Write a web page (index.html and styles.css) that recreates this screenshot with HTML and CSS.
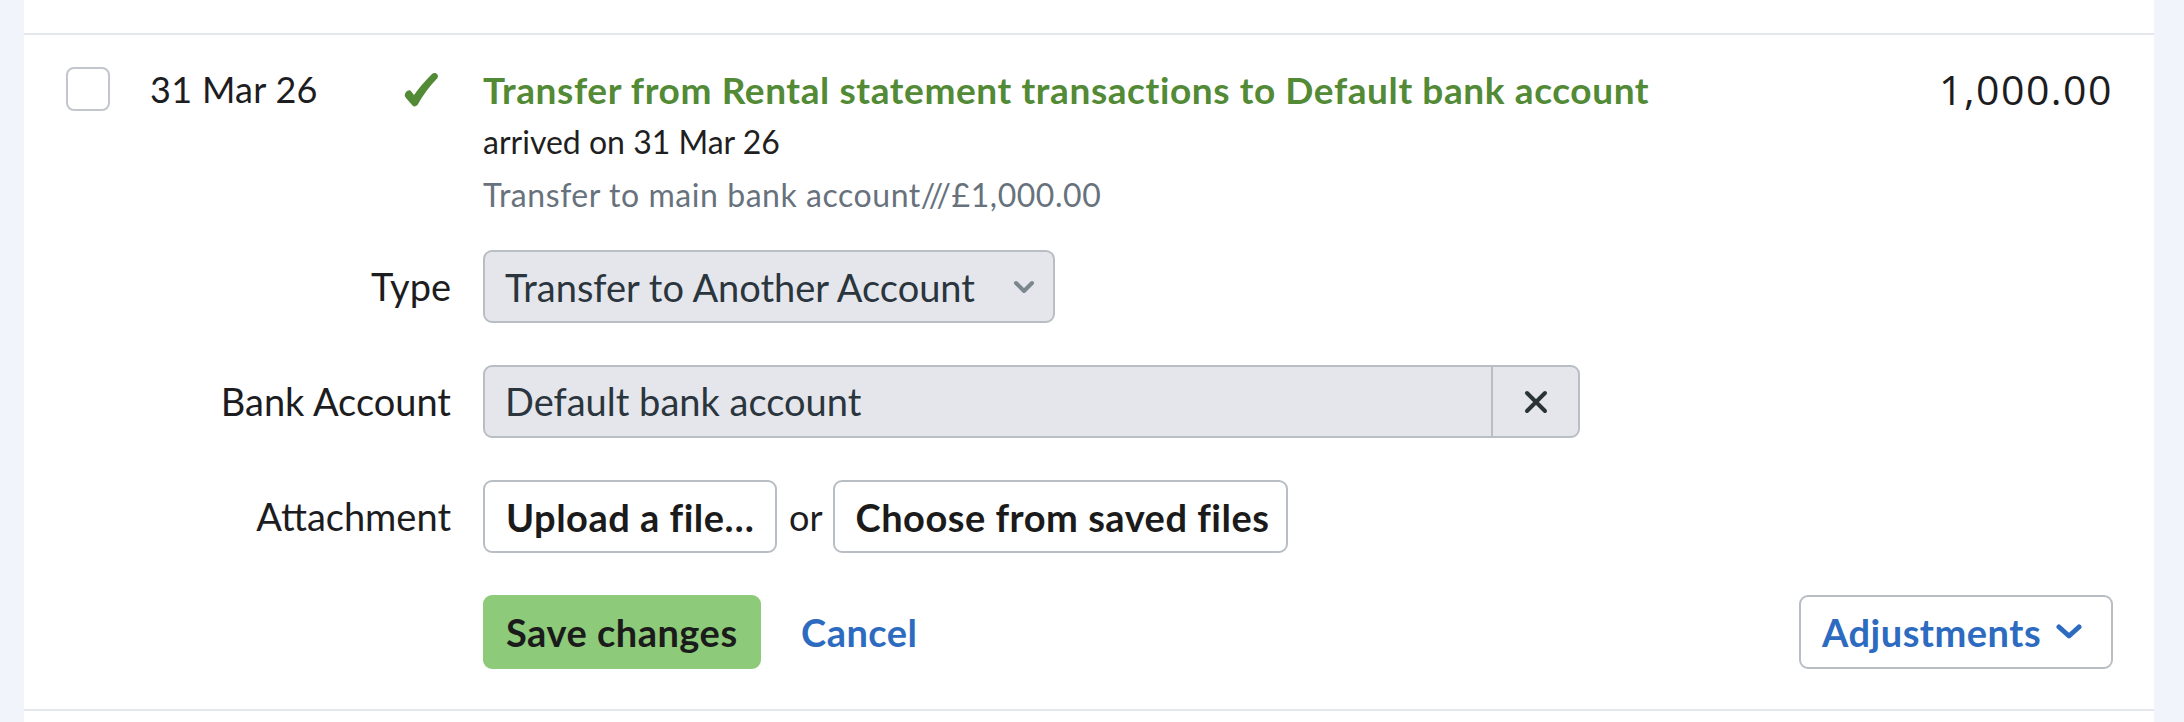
FILE: index.html
```html
<!DOCTYPE html>
<html lang="en">

<head>
    <meta charset="UTF-8">
    <title>Transaction</title>
    <link rel="stylesheet" href="styles.css">
</head>

<body>
    <div class="panel">
        <div class="prev-row"></div>
        <div class="txn">
            <div class="txn-head">
                <span class="checkbox"></span>
                <div class="date">31 Mar 26</div>
                <div class="status">
                    <svg width="35" height="36" viewBox="0 0 35 36">
                        <path d="M1 21.5 Q0 24 2 26 L8.5 33.5 Q10.5 35.5 13.5 33 Q21 19 33.5 6 Q35 2.5 31.5 1 Q29.5 0.5 28 2 Q17 13 10 23 L6.5 18.5 Q3.5 17 1 21.5 Z" fill="#528a36"/>
                    </svg>
                </div>
                <div class="details">
                    <div class="title">Transfer from Rental statement transactions to Default bank account</div>
                    <div class="arrived">arrived on 31 Mar 26</div>
                    <div class="desc">Transfer to main bank account///£1,000.00</div>
                </div>
                <div class="amount">1,000.00</div>
            </div>

            <div class="edit">
                <div class="label">Type</div>
                <div class="field">
                    <div class="select">
                        <span>Transfer to Another Account</span>
                        <svg width="22" height="14" viewBox="0 0 22 14">
                            <path d="M3 3 L11 11 L19 3" fill="none" stroke="#7c868f" stroke-width="4" stroke-linecap="round" stroke-linejoin="round"/>
                        </svg>
                    </div>
                </div>

                <div class="label">Bank Account</div>
                <div class="field">
                    <div class="combo">
                        <span class="combo-text">Default bank account</span>
                        <span class="combo-clear">
                            <svg width="24" height="24" viewBox="0 0 24 24">
                                <path d="M3 3 L21 21 M21 3 L3 21" fill="none" stroke="#2b3338" stroke-width="4" stroke-linecap="round"/>
                            </svg>
                        </span>
                    </div>
                </div>

                <div class="label">Attachment</div>
                <div class="field attach">
                    <span class="btn upload">Upload a file…</span>
                    <span class="or">or</span>
                    <span class="btn choose">Choose from saved files</span>
                </div>

                <div></div>
                <div class="field actions">
                    <span class="btn save">Save changes</span>
                    <a href="#" class="cancel">Cancel</a>
                    <span class="btn adjust">Adjustments
                        <svg width="26" height="16" viewBox="0 0 26 16">
                            <path d="M3 3 L13 12 L23 3" fill="none" stroke="#2d6bc0" stroke-width="5" stroke-linecap="round" stroke-linejoin="round"/>
                        </svg>
                    </span>
                </div>
            </div>
        </div>
    </div>
</body>

</html>
```

FILE: styles.css
```css
* {
    margin: 0;
    padding: 0;
    box-sizing: border-box;
}

body {
    background-color: #f1f4fb;
    font-family: Lato, "Noto Sans", sans-serif;
    color: #1d1d1f;
}

.panel {
    min-height: 100vh;
    margin: 0 30px 0 24px;
    background-color: #fff;
}

.prev-row {
    height: 35px;
    border-bottom: 2px solid #e4e7ec;
}

.txn {
    padding: 29px 41px 41px 42px;
    border-bottom: 2px solid #e4e7ec;
}

/* top line of the transaction */
.txn-head {
    display: flex;
    align-items: flex-start;
    line-height: 51px;
}

.checkbox {
    display: block;
    width: 44px;
    height: 44px;
    margin-top: 3px;
    margin-right: 40px;
    border: 2px solid #c3c7cd;
    border-radius: 8px;
}

.date {
    width: 254px;
    font-size: 36px;
    letter-spacing: 0.3px;
}

.status {
    width: 79px;
    padding-top: 8px;
    line-height: 0;
}

.details {
    flex: 1;
}

.title {
    font-size: 37px;
    font-weight: 700;
    letter-spacing: 0.6px;
    color: #528a36;
}

.arrived {
    font-size: 32px;
    line-height: 53px;
    color: #1f1f1f;
}

.desc {
    font-size: 32px;
    line-height: 54px;
    letter-spacing: 0.55px;
    color: #67727d;
}

.amount {
    font-family: "Open Sans", sans-serif;
    font-size: 41px;
    letter-spacing: 1.5px;
    color: #1d1d1f;
}

/* edit form */
.edit {
    display: grid;
    grid-template-columns: 385px 1fr;
    column-gap: 32px;
    row-gap: 42px;
    margin-top: 28px;
}

.label {
    height: 73px;
    line-height: 73px;
    text-align: right;
    font-size: 38px;
}

.field {
    display: flex;
    align-items: center;
    height: 73px;
}

.select {
    display: flex;
    align-items: center;
    justify-content: space-between;
    width: 572px;
    height: 73px;
    padding: 0 18px 0 20px;
    background-color: #e4e6eb;
    border: 2px solid #b9bec5;
    border-radius: 9px;
    font-size: 38px;
    color: #2b353d;
}

.combo {
    display: flex;
    width: 1097px;
    height: 73px;
    background-color: #e4e6eb;
    border: 2px solid #b9bec5;
    border-radius: 9px;
    font-size: 38px;
    color: #2b353d;
}

.combo-text {
    flex: 1;
    line-height: 69px;
    padding-left: 20px;
}

.combo-clear {
    display: flex;
    align-items: center;
    justify-content: center;
    width: 87px;
    border-left: 2px solid #b9bec5;
}

.btn {
    display: inline-flex;
    align-items: center;
    height: 73px;
    padding: 0 0 0 21px;
    background-color: #fff;
    border: 2px solid #b9bec5;
    border-radius: 9px;
    font-size: 38px;
    font-weight: 700;
    letter-spacing: 0.5px;
    color: #1b1b1b;
    white-space: nowrap;
}

.upload {
    width: 294px;
}

.choose {
    width: 455px;
}

.or {
    margin: 0 10px 0 12px;
    font-size: 36px;
}

.actions .save {
    width: 278px;
    height: 74px;
    background-color: #8dca79;
    border-color: #8dca79;
}

.cancel {
    margin-left: 40px;
    font-size: 38px;
    font-weight: 700;
    letter-spacing: 0.5px;
    color: #2d6bc0;
    text-decoration: none;
}

.actions .adjust {
    width: 314px;
    margin-left: auto;
    height: 74px;
    color: #2d6bc0;
}

.adjust svg {
    margin-left: 15px;
}
```
